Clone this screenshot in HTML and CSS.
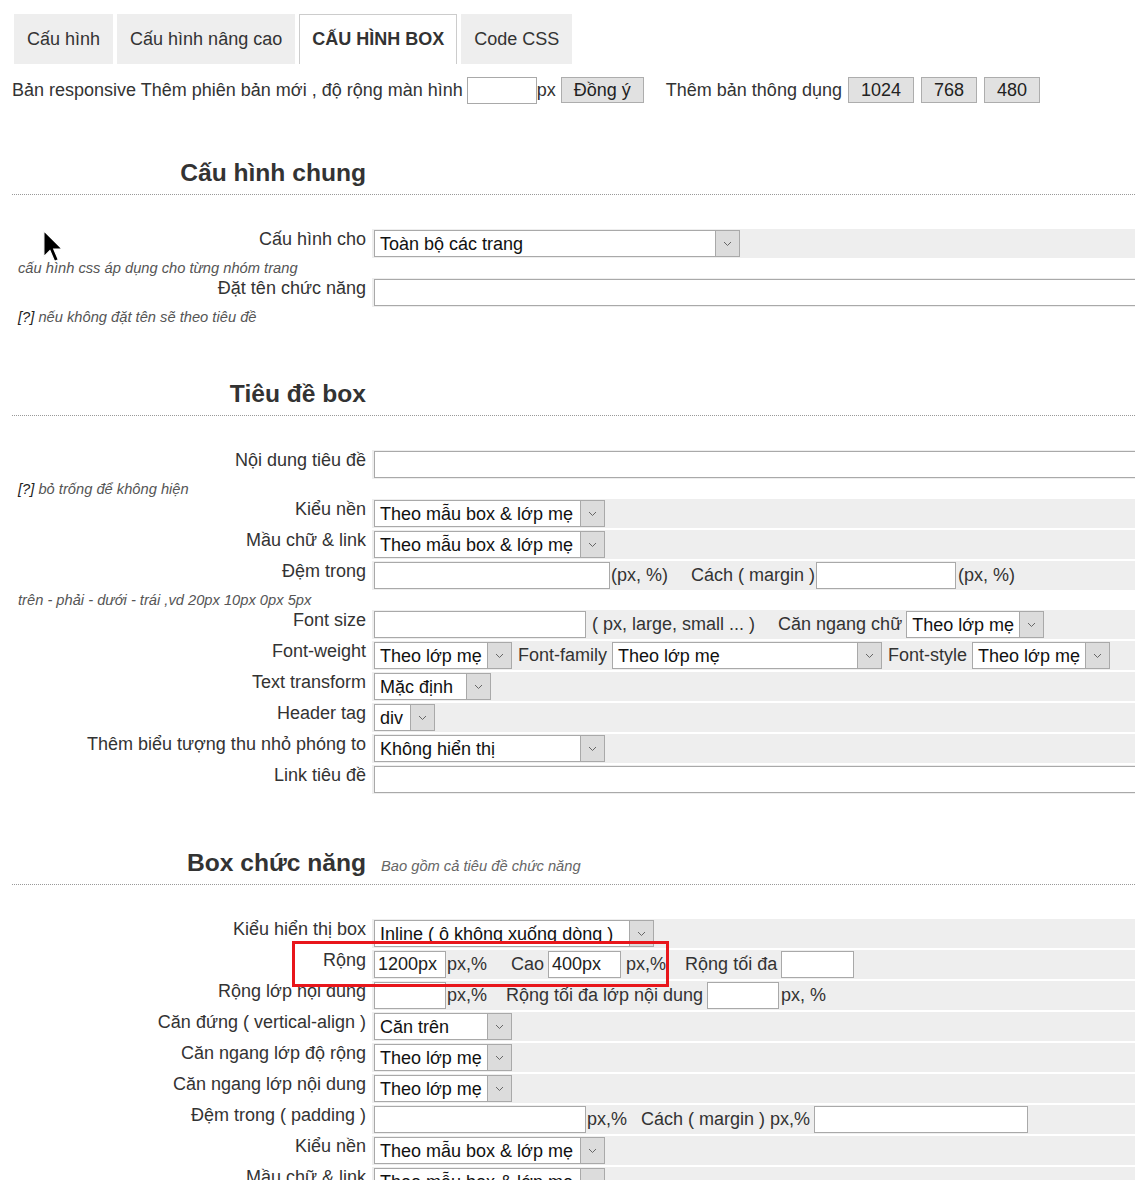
FILE: index.html
```html
<!DOCTYPE html>
<html lang="vi">
<head>
    <meta charset="UTF-8">
    <meta name="viewport" content="width=device-width, initial-scale=1.0">
    <title>Cấu hình box</title>
    <link rel="stylesheet" href="styles.css">
</head>
<body>
    <div class="tabs">
        <div class="tab">Cấu hình</div>
        <div class="tab">Cấu hình nâng cao</div>
        <div class="tab active">CẤU HÌNH BOX</div>
        <div class="tab">Code CSS</div>
    </div>

    <div class="responsive">
        <span>Bản responsive Thêm phiên bản mới , độ rộng màn hình</span>
        <input type="text" class="inp w70 ml4">
        <span>px</span>
        <button class="btn ml5">Đồng ý</button>
        <span class="ml22">Thêm bản thông dụng</span>
        <button class="btn ml6">1024</button>
        <button class="btn ml7">768</button>
        <button class="btn ml7">480</button>
    </div>

    <!-- cau hinh chung -->
    <div class="sec">
        <div class="sec-head"><h2>Cấu hình chung</h2><span></span></div>
        <div class="form">
            <div class="lbl">Cấu hình cho</div>
            <div class="val">
                <div class="sel w366"><span>Toàn bộ các trang</span><i class="arr"><svg width="9" height="6" viewBox="0 0 9 6"><path d="M1 1l3.5 3.5L8 1"/></svg></i></div>
            </div>
            <div class="hint">cấu hình css áp dụng cho từng nhóm trang</div>
            <div class="lbl">Đặt tên chức năng</div>
            <div class="val"><input type="text" class="inp full"></div>
            <div class="hint"><span class="q">[?]</span> nếu không đặt tên sẽ theo tiêu đề</div>
        </div>
    </div>

    <!-- tieu de box -->
    <div class="sec">
        <div class="sec-head"><h2>Tiêu đề box</h2><span></span></div>
        <div class="form">
            <div class="lbl">Nội dung tiêu đề</div>
            <div class="val"><input type="text" class="inp full"></div>
            <div class="hint"><span class="q">[?]</span> bỏ trống để không hiện</div>

            <div class="lbl">Kiểu nền</div>
            <div class="val">
                <div class="sel w231"><span>Theo mẫu box &amp; lớp mẹ</span><i class="arr"><svg width="9" height="6" viewBox="0 0 9 6"><path d="M1 1l3.5 3.5L8 1"/></svg></i></div>
            </div>
            <div class="lbl">Mầu chữ &amp; link</div>
            <div class="val">
                <div class="sel w231"><span>Theo mẫu box &amp; lớp mẹ</span><i class="arr"><svg width="9" height="6" viewBox="0 0 9 6"><path d="M1 1l3.5 3.5L8 1"/></svg></i></div>
            </div>
            <div class="lbl">Đệm trong</div>
            <div class="val">
                <input type="text" class="inp w236">
                <span class="ml1">(px, %)</span>
                <span class="ml23">Cách ( margin )</span>
                <input type="text" class="inp w140 ml1">
                <span class="ml2">(px, %)</span>
            </div>
            <div class="hint">trên - phải - dưới - trái ,vd 20px 10px 0px 5px</div>

            <div class="lbl">Font size</div>
            <div class="val">
                <input type="text" class="inp w212">
                <span class="ml6">( px, large, small ... )</span>
                <span class="ml23">Căn ngang chữ</span>
                <div class="sel w138 ml4"><span>Theo lớp mẹ</span><i class="arr"><svg width="9" height="6" viewBox="0 0 9 6"><path d="M1 1l3.5 3.5L8 1"/></svg></i></div>
            </div>
            <div class="lbl">Font-weight</div>
            <div class="val">
                <div class="sel w138"><span>Theo lớp mẹ</span><i class="arr"><svg width="9" height="6" viewBox="0 0 9 6"><path d="M1 1l3.5 3.5L8 1"/></svg></i></div>
                <span class="ml6">Font-family</span>
                <div class="sel w270 ml5"><span>Theo lớp mẹ</span><i class="arr"><svg width="9" height="6" viewBox="0 0 9 6"><path d="M1 1l3.5 3.5L8 1"/></svg></i></div>
                <span class="ml6">Font-style</span>
                <div class="sel w138 ml5"><span>Theo lớp mẹ</span><i class="arr"><svg width="9" height="6" viewBox="0 0 9 6"><path d="M1 1l3.5 3.5L8 1"/></svg></i></div>
            </div>
            <div class="lbl">Text transform</div>
            <div class="val">
                <div class="sel w117"><span>Mặc định</span><i class="arr"><svg width="9" height="6" viewBox="0 0 9 6"><path d="M1 1l3.5 3.5L8 1"/></svg></i></div>
            </div>
            <div class="lbl">Header tag</div>
            <div class="val">
                <div class="sel w61"><span>div</span><i class="arr"><svg width="9" height="6" viewBox="0 0 9 6"><path d="M1 1l3.5 3.5L8 1"/></svg></i></div>
            </div>
            <div class="lbl">Thêm biểu tượng thu nhỏ phóng to</div>
            <div class="val">
                <div class="sel w231"><span>Không hiển thị</span><i class="arr"><svg width="9" height="6" viewBox="0 0 9 6"><path d="M1 1l3.5 3.5L8 1"/></svg></i></div>
            </div>
            <div class="lbl">Link tiêu đề</div>
            <div class="val"><input type="text" class="inp full"></div>
        </div>
    </div>

    <!-- box chuc nang -->
    <div class="sec">
        <div class="sec-head"><h2>Box chức năng</h2><span class="sub">Bao gồm cả tiêu đề chức năng</span></div>
        <div class="form">
            <div class="lbl">Kiểu hiển thị box</div>
            <div class="val">
                <div class="sel w280"><span>Inline ( ô không xuống dòng )</span><i class="arr"><svg width="9" height="6" viewBox="0 0 9 6"><path d="M1 1l3.5 3.5L8 1"/></svg></i></div>
            </div>
            <div class="lbl">Rộng</div>
            <div class="val">
                <input type="text" class="inp w72" value="1200px">
                <span class="ml1">px,%</span>
                <span class="ml24">Cao</span>
                <input type="text" class="inp w73 ml4" value="400px">
                <span class="ml5">px,%</span>
                <span class="ml19">Rộng tối đa</span>
                <input type="text" class="inp w73 ml4">
            </div>
            <div class="lbl">Rộng lớp nội dung</div>
            <div class="val">
                <input type="text" class="inp w72">
                <span class="ml1">px,%</span>
                <span class="ml19">Rộng tối đa lớp nội dung</span>
                <input type="text" class="inp w72 ml4">
                <span class="ml2">px, %</span>
            </div>
            <div class="lbl">Căn đứng ( vertical-align )</div>
            <div class="val">
                <div class="sel w138"><span>Căn trên</span><i class="arr"><svg width="9" height="6" viewBox="0 0 9 6"><path d="M1 1l3.5 3.5L8 1"/></svg></i></div>
            </div>
            <div class="lbl">Căn ngang lớp độ rộng</div>
            <div class="val">
                <div class="sel w138"><span>Theo lớp mẹ</span><i class="arr"><svg width="9" height="6" viewBox="0 0 9 6"><path d="M1 1l3.5 3.5L8 1"/></svg></i></div>
            </div>
            <div class="lbl">Căn ngang lớp nội dung</div>
            <div class="val">
                <div class="sel w138"><span>Theo lớp mẹ</span><i class="arr"><svg width="9" height="6" viewBox="0 0 9 6"><path d="M1 1l3.5 3.5L8 1"/></svg></i></div>
            </div>
            <div class="lbl">Đệm trong ( padding )</div>
            <div class="val">
                <input type="text" class="inp w212">
                <span class="ml1">px,%</span>
                <span class="ml14">Cách ( margin ) px,%</span>
                <input type="text" class="inp w214 ml4">
            </div>
            <div class="lbl">Kiểu nền</div>
            <div class="val">
                <div class="sel w231"><span>Theo mẫu box &amp; lớp mẹ</span><i class="arr"><svg width="9" height="6" viewBox="0 0 9 6"><path d="M1 1l3.5 3.5L8 1"/></svg></i></div>
            </div>
            <div class="lbl">Mầu chữ &amp; link</div>
            <div class="val">
                <div class="sel w231"><span>Theo mẫu box &amp; lớp mẹ</span><i class="arr"><svg width="9" height="6" viewBox="0 0 9 6"><path d="M1 1l3.5 3.5L8 1"/></svg></i></div>
            </div>
        </div>
    </div>

    <div class="mark"></div>
    <svg class="cursor" width="20" height="32" viewBox="0 0 13 21"><path d="M0.5 0.5v17l4-4 3 7 2.5-1-3-7h5.5z" fill="#000" stroke="#fff" stroke-width="0.8"/></svg>
</body>
</html>
```

FILE: styles.css
```css
html {
    overflow: hidden;
}
body {
    font-family: "Liberation Sans", Arial, sans-serif;
    font-size: 18px;
    color: #333;
    margin: 0;
    padding: 14px 0 0 12px;
    background: #fff;
    position: relative;
}

.tabs {
    display: flex;
    gap: 4px;
    margin-left: 2px;
}
.tab {
    background: #eee;
    padding: 14px 13px;
    line-height: 22px;
}
.tab.active {
    background: #fff;
    border: 1px solid #ccc;
    border-bottom: none;
    padding: 13px 12px 14px;
    font-weight: bold;
}

.responsive {
    display: flex;
    align-items: center;
    height: 28px;
    margin-top: 12px;
}

input, button {
    font-family: inherit;
    font-size: 18px;
    color: #222;
}
.inp {
    box-sizing: border-box;
    height: 27px;
    border: 1px solid #a9a9a9;
    background: #fff;
    padding: 0 3px;
    margin: 0;
}
.inp.full {
    flex: 1;
}
.btn {
    box-sizing: border-box;
    height: 26px;
    background: #e1e1e1;
    border: 1px solid #adadad;
    padding: 0 12px;
    margin: 0;
    line-height: 24px;
}

.sec {
    margin-top: 54px;
    margin-right: -12px;
}
.sec-head {
    display: grid;
    grid-template-columns: 358px 1fr;
    column-gap: 2px;
    align-items: baseline;
    border-bottom: 1px dotted #999;
    padding-bottom: 6px;
    margin-bottom: 34px;
}
.sec-head h2 {
    margin: 0;
    text-align: right;
    padding-right: 4px;
    font-size: 24.6px;
    line-height: 30px;
    color: #333;
}
.sec-head .sub {
    font-size: 14.7px;
    font-style: italic;
    color: #666;
    padding-left: 9px;
}

.form {
    display: grid;
    grid-template-columns: 358px 1fr;
    column-gap: 2px;
    row-gap: 2px;
}
.form .lbl {
    text-align: right;
    padding-right: 4px;
    line-height: 20px;
    white-space: nowrap;
}
.form .val {
    background: #eee;
    padding: 1px 2px;
    min-height: 27px;
    display: flex;
    align-items: center;
    white-space: nowrap;
}
.form .hint {
    grid-column: 1 / 3;
    padding-left: 6px;
    font-size: 14.7px;
    line-height: 16px;
    font-style: italic;
    color: #555;
}
.hint .q {
    color: #222;
}

.sel {
    box-sizing: border-box;
    display: flex;
    height: 27px;
    border: 1px solid #a9a9a9;
    background: #fff;
    color: #111;
}
.sel span {
    flex: 1;
    padding-left: 5px;
    line-height: 26px;
    overflow: hidden;
}
.sel .arr {
    width: 23px;
    background: #dcdcdc;
    border-left: 1px solid #a9a9a9;
    display: flex;
    align-items: center;
    justify-content: center;
}
.sel .arr path {
    fill: none;
    stroke: #666;
    stroke-width: 1;
}

.w61 { width: 61px; }
.w70 { width: 70px; }
.w72 { width: 72px; }
.w73 { width: 73px; }
.w117 { width: 117px; }
.w138 { width: 138px; }
.w140 { width: 140px; }
.w212 { width: 212px; }
.w214 { width: 214px; }
.w231 { width: 231px; }
.w236 { width: 236px; }
.w270 { width: 270px; }
.w280 { width: 280px; }
.w366 { width: 366px; }

.ml1 { margin-left: 1px; }
.ml2 { margin-left: 2px; }
.ml4 { margin-left: 4px; }
.ml5 { margin-left: 5px; }
.ml6 { margin-left: 6px; }
.ml7 { margin-left: 7px; }
.ml14 { margin-left: 14px; }
.ml19 { margin-left: 19px; }
.ml22 { margin-left: 22px; }
.ml23 { margin-left: 23px; }
.ml24 { margin-left: 24px; }

/* khung do danh dau */
.mark {
    position: absolute;
    left: 292px;
    top: 941px;
    width: 371px;
    height: 40px;
    border: 3px solid #e8161b;
}
.cursor {
    position: absolute;
    left: 43px;
    top: 230px;
}
```
